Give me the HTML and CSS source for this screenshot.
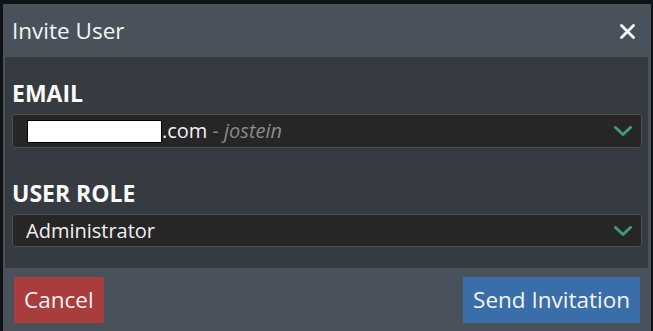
FILE: index.html
```html
<!DOCTYPE html>
<html lang="en">
<head>
<meta charset="utf-8">
<title>Invite User</title>
<link rel="stylesheet" href="styles.css">
</head>
<body>
<div class="modal">
  <div class="modal-header">
    <h5 class="modal-title">Invite User</h5>
    <button class="close" aria-label="Close">
      <svg width="15" height="15" viewBox="0 0 15 15"><path d="M1.5 1.5 L13.5 13.5 M13.5 1.5 L1.5 13.5" stroke="#fff" stroke-width="2.8" stroke-linecap="round"/></svg>
    </button>
  </div>
  <div class="modal-body">
    <label class="field-label">EMAIL</label>
    <div class="select">
      <span class="select-value"><span class="redact"></span>.com <span class="hint">- jostein</span></span>
      <svg class="chevron" width="18" height="11" viewBox="0 0 18 11"><path d="M1.5 1.5 L9 8.5 L16.5 1.5" fill="none" stroke="#3f9a82" stroke-width="3" stroke-linecap="round" stroke-linejoin="round"/></svg>
    </div>
    <label class="field-label second">USER ROLE</label>
    <div class="select short">
      <span class="select-value">Administrator</span>
      <svg class="chevron" width="18" height="11" viewBox="0 0 18 11"><path d="M1.5 1.5 L9 8.5 L16.5 1.5" fill="none" stroke="#3f9a82" stroke-width="3" stroke-linecap="round" stroke-linejoin="round"/></svg>
    </div>
  </div>
  <div class="modal-footer">
    <button class="btn btn-danger">Cancel</button>
    <button class="btn btn-primary">Send Invitation</button>
  </div>
</div>
</body>
</html>
```
FILE: styles.css
```css
html, body {
  margin: 0;
  padding: 0;
  background: #0f1316;
  height: 100%;
  overflow: hidden;
}
body {
  font-family: "Open Sans", "Noto Sans", sans-serif;
  color: #f2f2f2;
}
.modal {
  margin: 4px 2px 0 3px;
  width: 648px;
  background: #49525a;
}
.modal-header {
  height: 53px;
  display: flex;
  align-items: center;
  justify-content: space-between;
  padding: 0 16px 0 9px;
  box-sizing: border-box;
}
.modal-title {
  margin: 0;
  font-size: 22.5px;
  font-weight: 400;
  line-height: 26px;
  color: #f4f4f4;
}
.close {
  background: none;
  border: 0;
  padding: 0;
  width: 15px;
  height: 15px;
  display: flex;
  margin-top: 1px;
}
.modal-body {
  background: #363b41;
  margin: 0 3px 0 2px;
  padding: 23px 6px 21px 7px;
}
.field-label {
  display: block;
  font-size: 23px;
  font-weight: 700;
  line-height: 26px;
  margin-bottom: 8px;
  color: #fafafa;
}
.field-label.second {
  margin-top: 32px;
}
.select {
  height: 34px;
  box-sizing: border-box;
  background: #262626;
  border: 1px solid #4e4e4e;
  border-radius: 3px;
  display: flex;
  align-items: center;
  justify-content: space-between;
  padding: 0 9px 0 13px;
}
.select.short {
  height: 33px;
}
.select-value {
  font-size: 20px;
  line-height: 24px;
  color: #f0f0f0;
  display: flex;
  align-items: center;
  white-space: pre;
}
.redact {
  display: inline-block;
  width: 133px;
  height: 21px;
  background: #fff;
  border: 1px solid #000;
  margin-left: 1px;
}
.hint {
  font-style: italic;
  color: #8a8a8a;
}
.chevron {
  display: block;
  margin-top: 1px;
}
.modal-footer {
  display: flex;
  justify-content: space-between;
  padding: 9px 11px 9px 11px;
}
.btn {
  height: 46px;
  border: 0;
  border-radius: 1px;
  font-family: "Open Sans", "Noto Sans", sans-serif;
  font-size: 22.5px;
  color: #f4f4f4;
  padding: 0 10px;
  line-height: 26px;
}
.btn-danger {
  background: #a93c3c;
}
.btn-primary {
  background: #3a6ea9;
}
```
